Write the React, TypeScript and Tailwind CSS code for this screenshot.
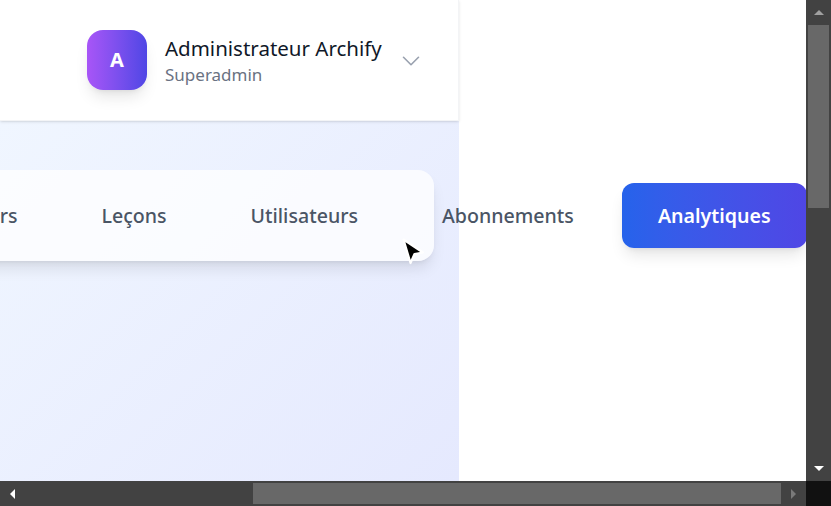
import { ChevronDown } from "lucide-react";

const navItems = ["Professeurs", "Leçons", "Utilisateurs", "Abonnements"];

function Cursor() {
  return (
    <svg
      className="absolute left-[400px] top-[237px]"
      width="28"
      height="30"
      viewBox="0 0 28 30"
    >
      <path
        d="M3.5 2.5 L23 15.5 L14.5 17 L10.5 26 Z"
        fill="#000"
        stroke="#fff"
        strokeWidth="2.2"
        strokeLinejoin="round"
      />
    </svg>
  );
}

function VScrollbar() {
  return (
    <div className="flex h-full w-[25px] flex-col items-center bg-[#424242]">
      <div className="flex h-[25px] items-center justify-center">
        <div className="h-0 w-0 border-x-[5px] border-b-[5px] border-x-transparent border-b-[#a0a0a0]" />
      </div>
      <div className="h-[183px] w-[21px] bg-[#686868]" />
      <div className="flex-1" />
      <div className="flex h-[25px] items-center justify-center">
        <div className="h-0 w-0 border-x-[5px] border-t-[5px] border-x-transparent border-t-white" />
      </div>
    </div>
  );
}

function HScrollbar() {
  return (
    <div className="flex h-[25px] w-[806px] items-center bg-[#424242]">
      <div className="flex w-[25px] items-center justify-center">
        <div className="h-0 w-0 border-y-[5px] border-r-[5px] border-y-transparent border-r-white" />
      </div>
      <div className="w-[228px]" />
      <div className="h-[21px] w-[528px] bg-[#686868]" />
      <div className="flex flex-1 items-center justify-center">
        <div className="h-0 w-0 border-y-[5px] border-l-[5px] border-y-transparent border-l-[#7a7a7a]" />
      </div>
    </div>
  );
}

export default function App() {
  return (
    <div
      className="flex h-[506px] w-[831px] flex-col overflow-hidden bg-white"
      style={{ fontFamily: '"Noto Sans", "Open Sans", sans-serif' }}
    >
      <div className="flex h-[481px]">
        <div className="relative flex w-[806px] flex-col overflow-hidden bg-white">
          {/* header */}
          <header className="relative z-10 flex h-[121px] w-[459px] shrink-0 items-center border-b border-r border-gray-100 bg-white pl-[87px] shadow-sm">
            <div className="flex h-[60px] w-[60px] items-center justify-center rounded-2xl bg-gradient-to-r from-[#a855f7] to-[#4f46e5] shadow-lg">
              <span className="text-[20px] font-bold text-white">A</span>
            </div>
            <div className="ml-[18px] flex flex-col">
              <span className="text-[20.5px] leading-[28px] text-gray-900">Administrateur Archify</span>
              <span className="text-[17px] leading-[25px] text-gray-500">Superadmin</span>
            </div>
            <ChevronDown className="ml-[14px] mt-[1px] h-[30px] w-[30px] text-gray-400" strokeWidth={1.3} />
          </header>

          {/* main */}
          <main className="flex-1 bg-white bg-[linear-gradient(135deg,#f0f6ff,#e5e9fe)] bg-[length:459px_100%] bg-no-repeat pt-[49px]">
            <nav className="ml-[-129px] flex h-[91px] w-[563px] flex-nowrap items-center gap-3 rounded-2xl bg-white/75 shadow-lg">
              {navItems.map((item) => (
                <span
                  key={item}
                  className="shrink-0 px-9 text-[19.6px] font-medium text-gray-600"
                >
                  {item}
                </span>
              ))}
              <span className="shrink-0 rounded-xl bg-gradient-to-r from-[#2563eb] to-[#4f46e5] px-9 py-[18px] text-[19.6px] font-semibold leading-[29px] text-white shadow-lg">
                Analytiques
              </span>
            </nav>
          </main>
          <Cursor />
        </div>
        <VScrollbar />
      </div>
      <div className="flex h-[25px]">
        <HScrollbar />
        <div className="w-[25px] bg-[#111111]" />
      </div>
    </div>
  );
}
